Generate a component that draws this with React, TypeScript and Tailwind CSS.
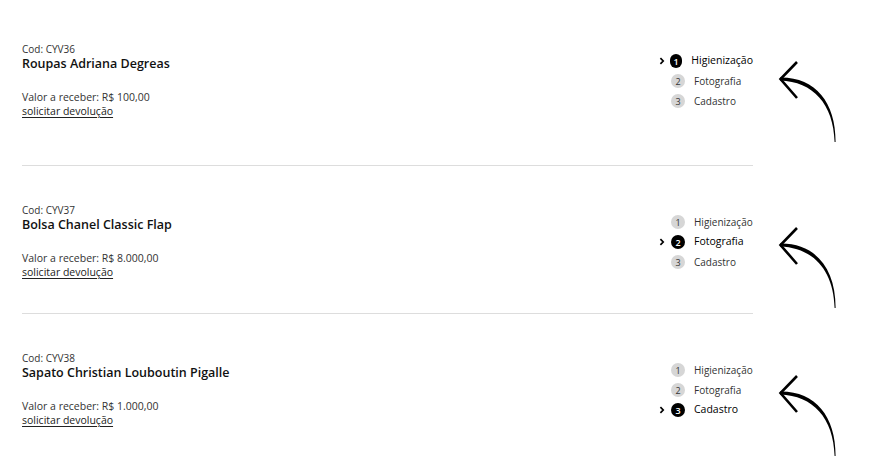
import React from 'react';

type Item = {
  code: string;
  name: string;
  value: string;
  step: number;
  pad: string;
  last?: boolean;
};

const STEPS = ['Higienização', 'Fotografia', 'Cadastro'];

const ITEMS: Item[] = [
  { code: 'CYV36', name: 'Roupas Adriana Degreas', value: 'R$ 100,00', step: 1, pad: 'pt-[42px] pb-[46px]' },
  { code: 'CYV37', name: 'Bolsa Chanel Classic Flap', value: 'R$ 8.000,00', step: 2, pad: 'pt-[37px] pb-[33px]' },
  { code: 'CYV38', name: 'Sapato Christian Louboutin Pigalle', value: 'R$ 1.000,00', step: 3, pad: 'pt-[37px] pb-[33px]', last: true },
];

function CurvedArrow() {
  return (
    <svg width="70" height="92" viewBox="0 0 70 92" className="absolute left-[22px] top-[54px]">
      <path d="M5 23.6 C 40 23 60.8 48 60.6 88 L 59.6 88 C 58.6 50 38 27.5 5 26.4 Z" fill="#000" />
      <path d="M22 8 L5.5 25 L22 44" fill="none" stroke="#000" strokeWidth="2.6" strokeLinejoin="miter" />
    </svg>
  );
}

function Chevron() {
  return (
    <svg width="6" height="8" viewBox="0 0 6 8">
      <path d="M1.4 1.2 L4.2 4 L1.4 6.8" fill="none" stroke="#000" strokeWidth="1.7" />
    </svg>
  );
}

function Steps({ current }: { current: number }) {
  return (
    <div className="mt-[9px] flex w-[96px] flex-col">
      {STEPS.map((label, i) => {
        const n = i + 1;
        const active = n === current;
        return (
          <div key={label} className="flex h-[20px] items-center">
            <div className="flex w-[14px] items-center pl-[2px]">{active && <Chevron />}</div>
            <div
              className={
                active
                  ? 'flex h-[14px] w-[14px] items-center justify-center rounded-full bg-black text-[9px] font-semibold leading-none text-white'
                  : 'flex h-[14px] w-[14px] items-center justify-center rounded-full bg-[#d6d6d6] text-[9px] leading-none text-[#333]'
              }
            >
              {n}
            </div>
            <span
              className={
                active
                  ? 'ml-[9px] text-[10.5px] font-medium text-black'
                  : 'ml-[9px] text-[10px] text-[#333]'
              }
            >
              {label}
            </span>
          </div>
        );
      })}
    </div>
  );
}

export default function App() {
  return (
    <div className="min-h-[468px] bg-white pl-[22px] font-['Open_Sans',sans-serif]">
      {ITEMS.map(item => (
        <section
          key={item.code}
          className={`relative flex w-[731px] items-start ${item.pad} ${item.last ? '' : 'border-b border-[#dddddd]'}`}
        >
          <div className="flex flex-col">
            <p className="text-[10px] leading-[14px] text-[#333]">Cod: {item.code}</p>
            <h3 className="text-[12.5px] font-semibold leading-[16px] text-[#111]">{item.name}</h3>
            <p className="mt-[18px] text-[10.5px] leading-[14px] text-[#333]">Valor a receber: {item.value}</p>
            <a href="#" className="text-[10.5px] leading-[15px] text-[#222] underline underline-offset-2">
              solicitar devolução
            </a>
          </div>
          <div className="ml-auto">
            <Steps current={item.step} />
          </div>
          <div className="absolute left-full top-0">
            <div className="relative">
              <CurvedArrow />
            </div>
          </div>
        </section>
      ))}
    </div>
  );
}
